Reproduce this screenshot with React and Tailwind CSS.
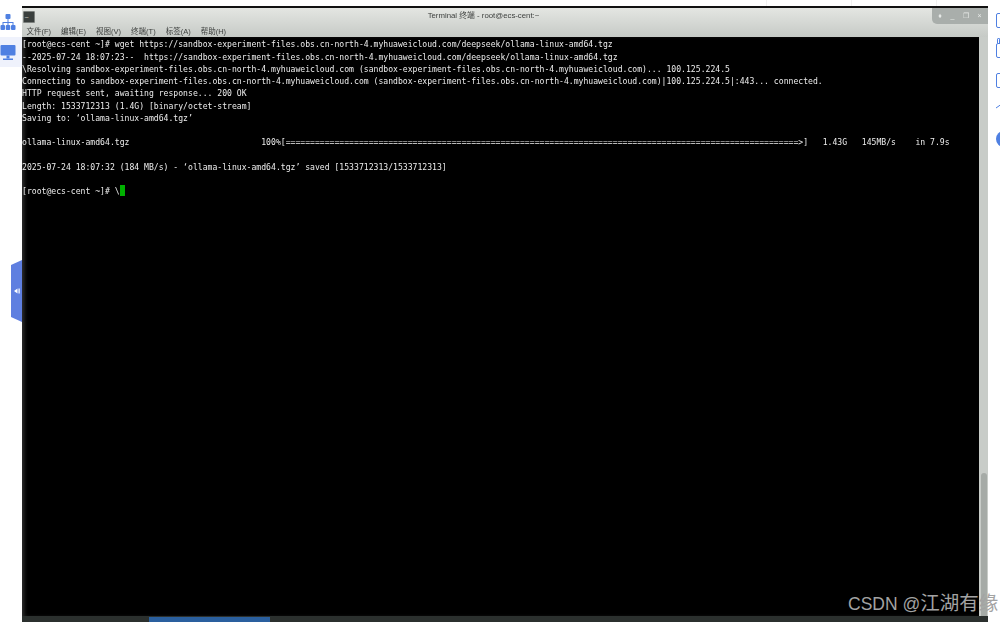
import React from 'react';

const lines = [
  "[root@ecs-cent ~]# wget https://sandbox-experiment-files.obs.cn-north-4.myhuaweicloud.com/deepseek/ollama-linux-amd64.tgz",
  "--2025-07-24 18:07:23--  https://sandbox-experiment-files.obs.cn-north-4.myhuaweicloud.com/deepseek/ollama-linux-amd64.tgz",
  "\\Resolving sandbox-experiment-files.obs.cn-north-4.myhuaweicloud.com (sandbox-experiment-files.obs.cn-north-4.myhuaweicloud.com)... 100.125.224.5",
  "Connecting to sandbox-experiment-files.obs.cn-north-4.myhuaweicloud.com (sandbox-experiment-files.obs.cn-north-4.myhuaweicloud.com)|100.125.224.5|:443... connected.",
  "HTTP request sent, awaiting response... 200 OK",
  "Length: 1533712313 (1.4G) [binary/octet-stream]",
  "Saving to: ‘ollama-linux-amd64.tgz’",
  "",
  "ollama-linux-amd64.tgz                           100%[" + "=".repeat(105) + ">]   1.43G   145MB/s    in 7.9s",
  "",
  "2025-07-24 18:07:32 (184 MB/s) - ‘ollama-linux-amd64.tgz’ saved [1533712313/1533712313]",
  "",
];

const menus = ['文件(F)', '编辑(E)', '视图(V)', '终端(T)', '标签(A)', '帮助(H)'];

const LeftRail = () => (
  <aside className="w-[22px] shrink-0 flex flex-col bg-white text-[#4f80e2]">
    <svg className="mt-[14px] w-[16px] h-[16px]" viewBox="0 0 16 16" fill="currentColor">
      <rect x="5.500" y="0" width="5" height="5" rx="1" />
      <path d="M7.500 5h1v3h5v3h-1V9H8.500v2h-1V9H3.500v2h-1V8h5z" />
      <rect x="0.500" y="11" width="4.500" height="5" rx="1" />
      <rect x="5.750" y="11" width="4.500" height="5" rx="1" />
      <rect x="11" y="11" width="4.500" height="5" rx="1" />
    </svg>
    <div className="mt-[7px] w-full h-[30px] bg-[#eff2fc] flex items-center">
      <svg className="w-[16px] h-[17px]" viewBox="0 0 16 17" fill="currentColor">
        <rect x="0.500" y="1" width="15" height="10.500" rx="1" />
        <rect x="6.500" y="11.500" width="3" height="3" />
        <rect x="3" y="14.500" width="10" height="1.500" />
      </svg>
    </div>
  </aside>
);

const RightRail = () => (
  <aside className="w-[12px] shrink-0 bg-white overflow-hidden flex flex-col pl-[8px] pt-[13px] text-[#4f80e2]">
    <div className="w-[8px] h-[15px] shrink-0 rounded-[2px] border border-current" />
    <div className="mt-[10px] ml-[1px] w-[3px] h-[5px] shrink-0 rounded-t-[2px] border border-b-0 border-current" />
    <div className="w-[8px] h-[15px] shrink-0 rounded-[2px] border border-current" />
    <div className="mt-[15px] w-[8px] h-[15px] shrink-0 rounded-[2px] border border-current" />
    <svg className="mt-[15px] w-[8px] h-[8px] shrink-0" viewBox="0 0 8 8" fill="none" stroke="currentColor">
      <path d="M0 5L5 1.500L8 3" />
    </svg>
    <div className="mt-[20px] w-[16px] h-[16px] shrink-0 rounded-full bg-[#4f80e2]" />
  </aside>
);

const TitleBar = () => (
  <div className="h-[29px] shrink-0 bg-gradient-to-b from-[#e4e6e2] to-[#c6cac6] font-['Liberation_Sans','Noto_Sans_CJK_SC',sans-serif] text-[#3c3f3d]">
    <div className="flex h-[16px] items-start pl-[1px]">
      <div className="mt-[3px] w-[12px] h-[12px] rounded-[1px] bg-[#3a3f3d] border border-[#7c807d] text-white text-[6px] leading-[7px] pl-[1px]">_</div>
      <div className="flex-1 text-center text-[7.800px] leading-[16px] blur-[0.3px]">Terminal 终端 - root@ecs-cent:~</div>
      <div className="w-[56px] h-[16px] rounded-bl-[5px] bg-[#a9aeab] text-[#e8eae8] text-[7px] flex items-center justify-around px-[2px] blur-[0.3px]">
        <span>♦</span><span>_</span><span>❐</span><span>×</span>
      </div>
    </div>
    <div className="flex gap-[10px] pl-[4.500px] text-[7.500px] leading-[15px] blur-[0.3px]">
      {menus.map((m) => <span key={m}>{m}</span>)}
    </div>
  </div>
);

const Terminal = () => (
  <div className="flex-1 min-h-0 flex">
    <div className="flex-1 bg-black overflow-hidden pt-[1.400px] font-['DejaVu_Sans_Mono',monospace] text-[8.120px] leading-[12.250px] text-[#ececec] whitespace-pre shadow-[inset_4px_0_4px_-2px_#333]">
      <div className="blur-[0.4px]">
        {lines.map((l, i) => <div key={i} className="h-[12.250px]">{l}</div>)}
        <div className="h-[12.250px] flex">
          <span>{"[root@ecs-cent ~]# \\"}</span>
          <span className="w-[5px] h-[11px] bg-[#00b000]" />
        </div>
      </div>
    </div>
    <div className="w-[9px] bg-[#c8ccc8] flex flex-col justify-end items-center">
      <div className="w-[6px] h-[143px] rounded-t-full bg-[#a6aba7]" />
    </div>
  </div>
);

export default function App() {
  return (
    <div className="relative w-[1000px] h-[622px] overflow-hidden flex bg-white">
      <LeftRail />
      <div className="flex-1 min-w-0 flex flex-col">
        <div className="h-[6px] shrink-0 flex">
          <div className="w-[745px] border-r border-[#f1f1f1]" />
          <div className="w-[85px] border-r border-[#f1f1f1]" />
          <div className="w-[85px] border-r border-[#f1f1f1]" />
        </div>
        <div className="h-[2px] shrink-0 bg-[#111]" />
        <TitleBar />
        <Terminal />
        <div className="h-[6px] shrink-0 bg-[#2b302e] flex">
          <div className="ml-[127px] mt-[1px] w-[121px] bg-[#2a5f9e]" />
        </div>
      </div>
      <RightRail />
      <div className="absolute left-[11px] top-[260px] w-[11px] h-[62px] bg-[#5f7fe0] [clip-path:polygon(0_8%,100%_0,100%_100%,0_92%)] flex items-center justify-center">
        <svg className="w-[6px] h-[6px] text-white" viewBox="0 0 6 6" fill="currentColor">
          <path d="M0 3L3.500 0.500V5.500z" />
          <rect x="4.500" y="0.500" width="1.200" height="5" />
        </svg>
      </div>
      <div className="absolute left-[848px] top-[593px] flex items-center h-[22px] font-['Liberation_Sans','Noto_Sans_CJK_SC',sans-serif] text-[#a3a3a3] whitespace-pre">
        <span className="text-[17.500px]">CSDN @</span>
        <span className="text-[19.500px]">江湖有缘</span>
      </div>
    </div>
  );
}
